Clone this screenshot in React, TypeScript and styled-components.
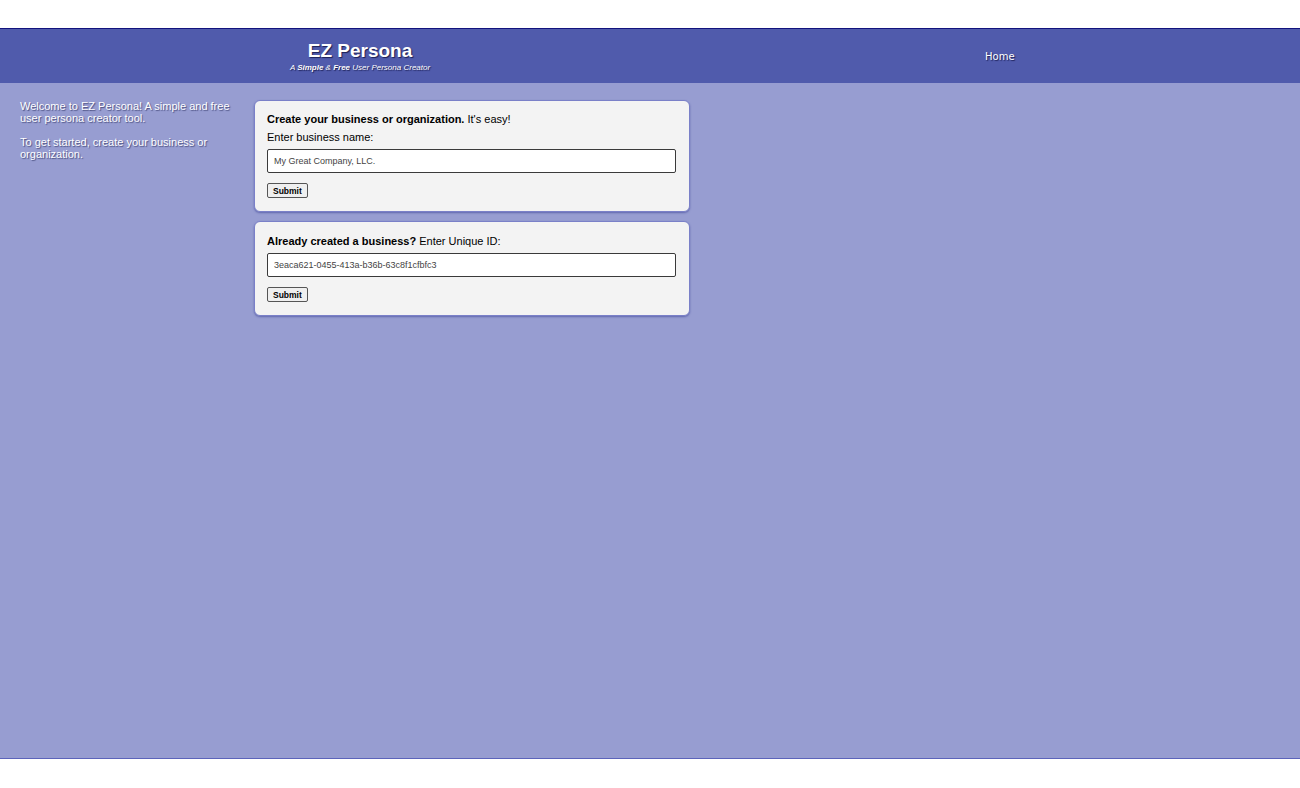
import styled, { createGlobalStyle } from "styled-components";

const GlobalStyle = createGlobalStyle`
    body {
        margin: 0;
        padding-top: 28px;
        background: #ffffff;
        font-family: "Liberation Sans", Arial, sans-serif;
    }
`

const Page = styled.div`
    width: 1300px;
`

const Header = styled.header`
    display: flex;
    align-items: center;
    height: 54px;
    border-top: 1px solid #12137e;
    background-color: #505bac;
`

const Brand = styled.div`
    width: 720px;
    display: flex;
    flex-direction: column;
    align-items: center;
    color: #ffffff;
    text-shadow: 1px 1px 1px #1c1f55;
`

const Title = styled.h1`
    margin: 0;
    font-size: 19px;
    line-height: 22px;
    font-weight: bold;
`

const Subtitle = styled.div`
    font-size: 8px;
    line-height: 11px;
    font-style: italic;
`

const Nav = styled.nav`
    padding-left: 265px;
    padding-bottom: 2px;
`

const NavLink = styled.a`
    font-family: "DejaVu Sans", Verdana, sans-serif;
    font-size: 10px;
    color: #ffffff;
    text-decoration: none;
    text-shadow: 1px 1px 1px #1c1f55;
`

const Main = styled.main`
    display: flex;
    gap: 14px;
    height: 676px;
    box-sizing: border-box;
    padding: 17px 20px;
    background-color: #979dd1;
    border-bottom: 1px solid #5c64bb;
`

const Sidebar = styled.aside`
    width: 220px;
    color: #ffffff;
    font-size: 11px;
    line-height: 12px;
    text-shadow: 1px 1px 1px #4a4f80;
`

const Para = styled.p`
    margin: 0 0 12px;
`

const Cards = styled.div`
    display: flex;
    flex-direction: column;
    gap: 9px;
    width: 436px;
`

const Card = styled.form<{ $top?: number }>`
    display: flex;
    flex-direction: column;
    align-items: flex-start;
    padding: ${(p) => p.$top ?? 11}px 12px 13px;
    background-color: #f3f3f3;
    border: 1px solid #7a80c8;
    border-radius: 6px;
    box-shadow: 0 1px 2px rgba(60, 66, 150, 0.6);
`

const Heading = styled.div<{ $gap?: number }>`
    font-size: 11px;
    line-height: 14px;
    color: #000000;
    margin-bottom: ${(p) => p.$gap ?? 4}px;
`

const Label = styled.label`
    font-size: 11px;
    line-height: 14px;
    color: #000000;
    margin-bottom: 5px;
`

const Input = styled.input`
    width: 409px;
    height: 24px;
    box-sizing: border-box;
    padding: 0 6px;
    border: 1px solid #3a3a3a;
    border-radius: 2px;
    background: #ffffff;
    font-family: "Liberation Sans", Arial, sans-serif;
    font-size: 9px;
    color: #444444;
    margin-bottom: 10px;
`

const Button = styled.button`
    height: 15px;
    padding: 0 5px;
    border: 1px solid #555555;
    border-radius: 2px;
    background: #efefef;
    font-family: "Liberation Sans", Arial, sans-serif;
    font-size: 8.5px;
    font-weight: bold;
    color: #000000;
    line-height: 12px;
`

export default function App() {
    return (
        <Page>
            <GlobalStyle />
            <Header>
                <Brand>
                    <Title>EZ Persona</Title>
                    <Subtitle>A <b>Simple</b> &amp; <b>Free</b> User Persona Creator</Subtitle>
                </Brand>
                <Nav>
                    <NavLink href="#">Home</NavLink>
                </Nav>
            </Header>
            <Main>
                <Sidebar>
                    <Para>Welcome to EZ Persona! A simple and free user persona creator tool.</Para>
                    <Para>To get started, create your business or organization.</Para>
                </Sidebar>
                <Cards>
                    <Card onSubmit={(e) => e.preventDefault()}>
                        <Heading><b>Create your business or organization.</b> It's easy!</Heading>
                        <Label>Enter business name:</Label>
                        <Input defaultValue="My Great Company, LLC." />
                        <Button type="submit">Submit</Button>
                    </Card>
                    <Card $top={12} onSubmit={(e) => e.preventDefault()}>
                        <Heading $gap={5}><b>Already created a business?</b> Enter Unique ID:</Heading>
                        <Input defaultValue="3eaca621-0455-413a-b36b-63c8f1cfbfc3" />
                        <Button type="submit">Submit</Button>
                    </Card>
                </Cards>
            </Main>
        </Page>
    );
}
